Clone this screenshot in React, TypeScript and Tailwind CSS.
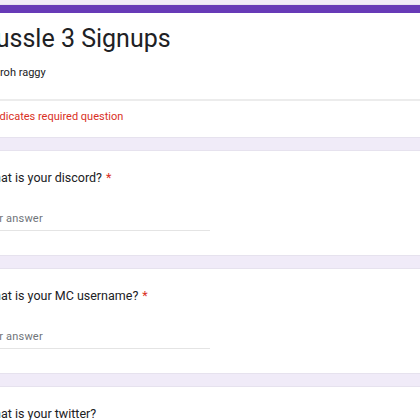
const questions = [
  { title: "What is your discord?", required: true },
  { title: "What is your MC username?", required: true },
  { title: "What is your twitter?", required: false },
];

function QuestionCard({ title, required }: { title: string; required: boolean }) {
  return (
    <div className="bg-white border border-[#e6e2ee] rounded-lg pl-[23px] pr-6 pt-[17px] pb-[24px] h-[106px]">
      <div className="text-[12.5px] leading-5 text-[#202124]">
        {title}
        {required && <span className="text-[#d93025] ml-1">*</span>}
      </div>
      <div className="mt-[23px] -ml-[3px] w-[230px] border-b border-[#e4e4e4] pb-[3px] text-[11px] leading-4 text-[#70757a] tracking-[0.2px]">
        Your answer
      </div>
    </div>
  );
}

export default function App() {
  return (
    <div className="w-[420px] h-[420px] overflow-hidden bg-[#f0ebf8] pt-1 font-['Roboto',sans-serif]">
      <div className="-ml-[41px] w-[640px] flex flex-col gap-3">
        <div className="bg-white rounded-lg border border-[#e6e2ee] overflow-hidden">
          <div className="h-[9px] -mt-px -mx-px bg-[#673ab7]"></div>
          <div className="pl-[23px] pr-6 pt-3 pb-[18px]">
            <h1 className="-ml-[1px] text-[25px] leading-7 text-[#202124] font-normal">
              Tussle 3 Signups
            </h1>
            <div className="mt-3 pl-[17px] text-[11px] leading-4 text-[#202124]">
              roh raggy
            </div>
          </div>
          <div className="h-[2px] bg-[#ececec]"></div>
          <div className="pl-[23px] pr-6 pt-2 pb-3 text-[11px] leading-4 text-[#d93025]">
            * Indicates required question
          </div>
        </div>
        {questions.map((q) => (
          <QuestionCard key={q.title} title={q.title} required={q.required} />
        ))}
      </div>
    </div>
  );
}
